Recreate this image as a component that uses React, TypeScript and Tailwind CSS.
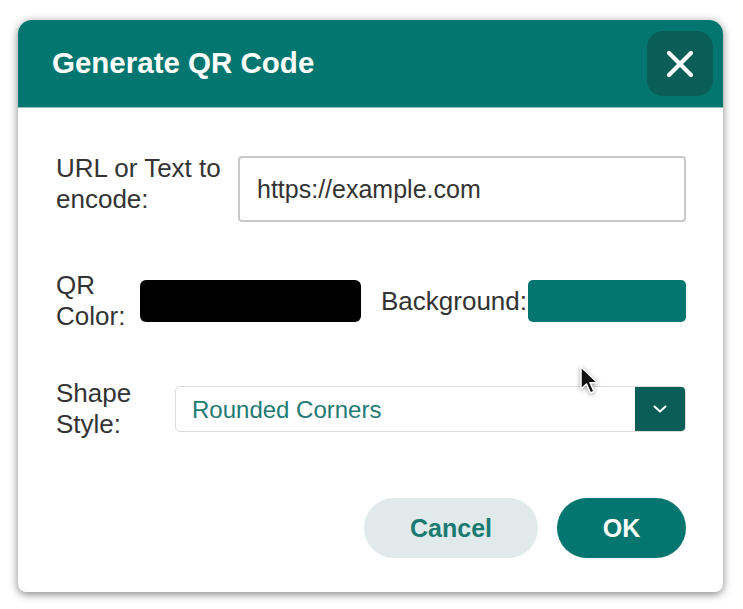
import { useState } from "react"

function CloseIcon() {
  return (
    <svg width="28" height="28" viewBox="0 0 28 28" fill="none">
      <path d="M3 3L25 25M25 3L3 25" stroke="white" strokeWidth="4.2" strokeLinecap="round" />
    </svg>
  )
}

function Chevron() {
  return (
    <svg width="14" height="8" viewBox="0 0 14 8" fill="none">
      <path d="M1.5 1.5L7 6.5L12.5 1.5" stroke="white" strokeWidth="2" strokeLinecap="round" strokeLinejoin="round" />
    </svg>
  )
}

function Pointer() {
  return (
    <svg width="22" height="32" viewBox="0 0 22 32" className="drop-shadow-[0_1px_2px_rgba(0,0,0,0.4)]">
      <path d="M2 2L2 24L7.5 19L11.5 28L15 26.5L11 17.8L18.5 17.8Z" fill="#111" stroke="white" strokeWidth="1.5" strokeLinejoin="round" />
    </svg>
  )
}

export default function App() {
  const [text, setText] = useState("https://example.com")

  return (
    <div className="min-h-[609px] bg-white pt-[20px] pl-[18px] font-[family-name:Liberation_Sans,Arial,sans-serif]">
      <div className="relative w-[705px] overflow-hidden rounded-t-[14px] rounded-b-[8px] bg-white shadow-[0_2px_9px_rgba(0,0,0,0.5)]">
        <div className="flex h-[88px] items-center justify-between border-b border-[#8cbfbb] bg-[#03766f] pr-[10px] pl-[34px]">
          <h1 className="text-[29.5px] font-bold text-white">Generate QR Code</h1>
          <button className="flex h-[65px] w-[66px] items-center justify-center rounded-[16px] bg-[#0b5e58]">
            <CloseIcon />
          </button>
        </div>

        <div className="flex flex-col pt-[45px] pr-[37px] pb-[34px] pl-[38px] text-[26px] leading-[31px] text-[#333]">
          <div className="flex items-start">
            <label className="w-[182px] shrink-0">
              URL or Text to
              <br />
              encode:
            </label>
            <input
              value={text}
              onChange={(event) => setText(event.target.value)}
              className="mt-[3px] h-[66px] flex-1 rounded-[4px] border-2 border-[#c9c9c9] bg-white px-[17px] text-[25px] text-[#333] outline-none"
            />
          </div>

          <div className="mt-[48px] flex items-center">
            <label className="w-[84px] shrink-0">
              QR
              <br />
              Color:
            </label>
            <div className="h-[42px] w-[221px] rounded-[6px] bg-black" />
            <span className="ml-[20px] w-[147px] shrink-0">Background:</span>
            <div className="h-[42px] flex-1 rounded-[5px] bg-[#03766f]" />
          </div>

          <div className="mt-[46px] flex items-center">
            <label className="w-[119px] shrink-0">
              Shape
              <br />
              Style:
            </label>
            <div className="flex h-[46px] flex-1 overflow-hidden rounded-[5px] border border-[#dcdcdc] bg-white">
              <span className="flex flex-1 items-center pl-[16px] text-[24px] text-[#227a74]">Rounded Corners</span>
              <span className="flex w-[50px] items-center justify-center bg-[#0b5e58]">
                <Chevron />
              </span>
            </div>
          </div>

          <div className="mt-[58px] flex justify-end gap-[19px]">
            <button className="h-[60px] w-[174px] rounded-full bg-[#e0eaea] text-[25px] font-bold text-[#1a7a72]">
              Cancel
            </button>
            <button className="h-[60px] w-[129px] rounded-full bg-[#03766f] text-[25px] font-bold text-white">OK</button>
          </div>
        </div>

        <div className="absolute top-[345px] left-[561px]">
          <Pointer />
        </div>
      </div>
    </div>
  )
}
